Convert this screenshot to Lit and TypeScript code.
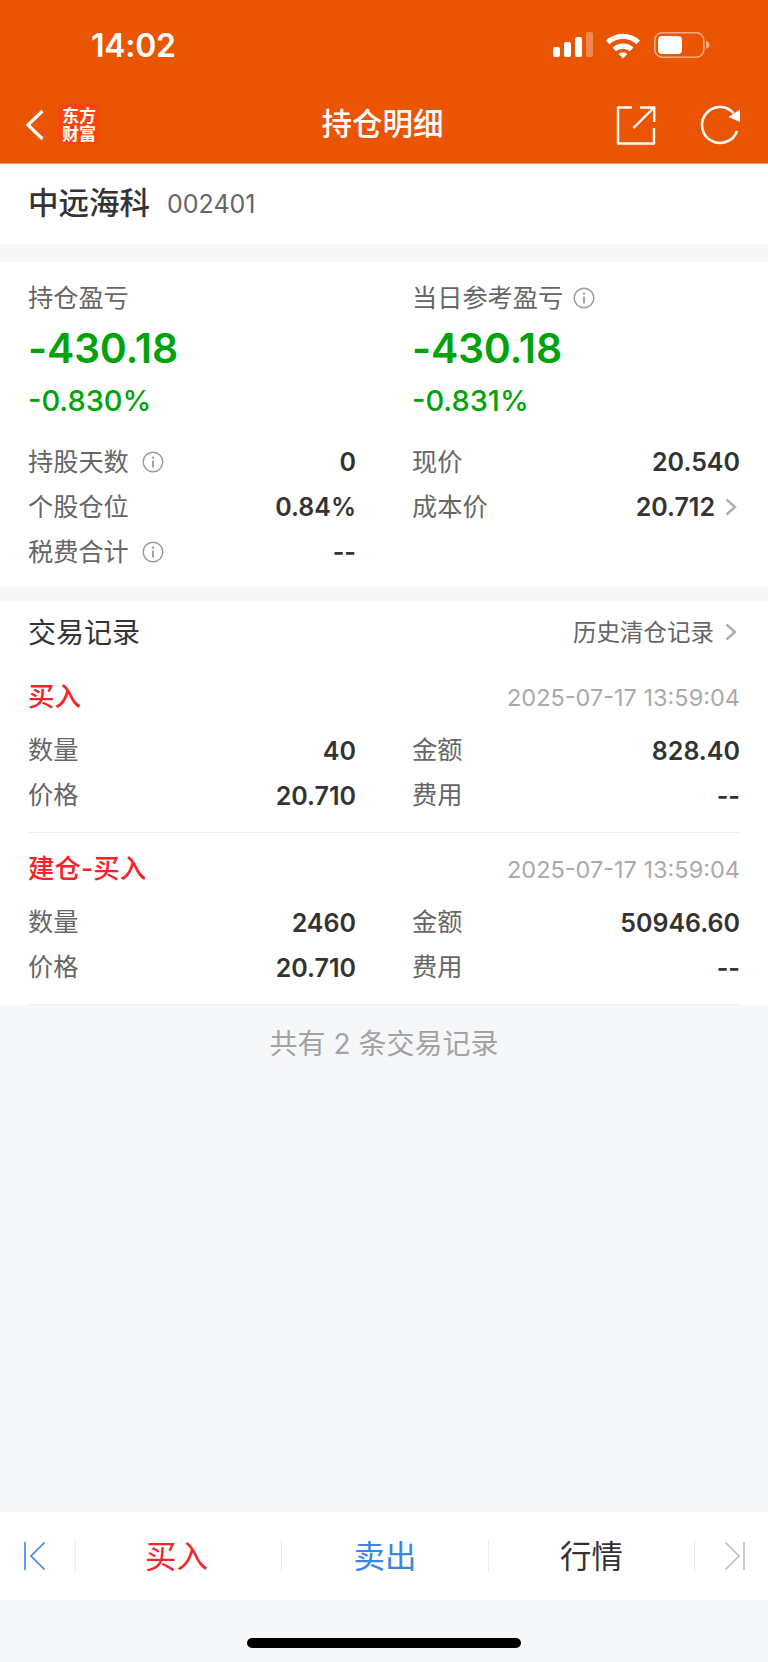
import { css, html, LitElement, svg } from 'lit';
import { customElement } from 'lit/decorators.js';

const infoIcon = html`
  <svg class="info" viewBox="0 0 22 22" width="22" height="22">
    <circle cx="11" cy="11" r="9.8" fill="none" stroke="#999" stroke-width="1.4"></circle>
    <circle cx="11" cy="6.6" r="1.2" fill="#999"></circle>
    <path d="M11 9.4v7.2" stroke="#999" stroke-width="1.8" fill="none"></path>
  </svg>
`;

const chevron = html`
  <svg class="chevron" viewBox="0 0 12 18" width="12" height="18">
    <path d="M1.5 1.5 10 9l-8.5 7.5" fill="none" stroke="#aeaeae" stroke-width="2.4"></path>
  </svg>
`;

interface Trade {
  type: string;
  time: string;
  qty: string;
  amount: string;
  price: string;
  fee: string;
}

const TRADES: Trade[] = [
  { type: '买入', time: '2025-07-17 13:59:04', qty: '40', amount: '828.40', price: '20.710', fee: '--' },
  { type: '建仓-买入', time: '2025-07-17 13:59:04', qty: '2460', amount: '50946.60', price: '20.710', fee: '--' },
];

@customElement('app-root')
export class AppRoot extends LitElement {
  private renderStatusBar() {
    return html`
      <div class="status">
        <span class="clock">14:02</span>
        <svg class="status-icons" viewBox="0 0 160 30" width="160" height="30">
          ${svg`
            <rect x="0" y="15" width="7" height="10" rx="2" fill="#fff"></rect>
            <rect x="11" y="10" width="7" height="15" rx="2" fill="#fff"></rect>
            <rect x="22" y="5" width="7" height="20" rx="2" fill="#fff"></rect>
            <rect x="33" y="0" width="7" height="25" rx="2" fill="#fff" fill-opacity="0.3"></rect>
            <path d="M53 8.5a25 25 0 0 1 34 0l-3.4 3.8a20 20 0 0 0-27.2 0z" fill="#fff"></path>
            <path d="M59.5 15.6a15.5 15.5 0 0 1 21 0l-3.5 3.7a10.5 10.5 0 0 0-14 0z" fill="#fff"></path>
            <path d="M65.6 22a6.5 6.5 0 0 1 8.8 0L70 26.4z" fill="#fff"></path>
            <rect x="101.8" y="0.8" width="49" height="24.4" rx="7.5" fill="none" stroke="#fff" stroke-opacity="0.5" stroke-width="1.6"></rect>
            <rect x="105" y="4" width="24" height="18" rx="4" fill="#fff"></rect>
            <path d="M153 9c2.4.6 3.6 2.2 3.6 4s-1.2 3.4-3.6 4z" fill="#fff" fill-opacity="0.5"></path>
          `}
        </svg>
      </div>
    `;
  }

  private renderNav() {
    return html`
      <div class="nav">
        <div class="nav-left">
          <svg viewBox="0 0 20 32" width="20" height="32">
            <path d="M17.5 2 3 16l14.5 14" fill="none" stroke="#fff" stroke-width="3.2"></path>
          </svg>
          <div class="logo">东方财富</div>
        </div>
        <div class="nav-title">持仓明细</div>
        <div class="nav-right">
          <svg viewBox="0 0 40 40" width="40" height="40">
            <path d="M16 2.5H2v36h36V23" fill="none" stroke="#fff" stroke-width="2.4" stroke-linejoin="round"></path>
            <path d="M24 2.5h14.2V17M38 2.5 17.5 23" fill="none" stroke="#fff" stroke-width="2.4"></path>
          </svg>
          <svg viewBox="0 0 40 40" width="40" height="40">
            <path d="M33.5 8A18 18 0 1 0 37 26" fill="none" stroke="#fff" stroke-width="2.6"></path>
            <path d="M40 4.5V17L28.5 12z" fill="#fff"></path>
          </svg>
        </div>
      </div>
    `;
  }

  private renderSummary() {
    return html`
      <section class="summary">
        <div class="col">
          <div class="label">持仓盈亏</div>
          <div class="big">-430.18</div>
          <div class="pct">-0.830%</div>
          <div class="rows">
            <div class="row"><span class="key">持股天数</span>${infoIcon}<span class="val">0</span></div>
            <div class="row"><span class="key">个股仓位</span><span class="val">0.84%</span></div>
            <div class="row"><span class="key">税费合计</span>${infoIcon}<span class="val">--</span></div>
          </div>
        </div>
        <div class="col">
          <div class="label">当日参考盈亏${infoIcon}</div>
          <div class="big">-430.18</div>
          <div class="pct">-0.831%</div>
          <div class="rows">
            <div class="row"><span class="key">现价</span><span class="val">20.540</span></div>
            <div class="row"><span class="key">成本价</span><span class="val">20.712${chevron}</span></div>
          </div>
        </div>
      </section>
    `;
  }

  private renderTrade(t: Trade) {
    return html`
      <div class="trade">
        <div class="trade-head">
          <span class="trade-type">${t.type}</span>
          <span class="trade-time">${t.time}</span>
        </div>
        <div class="trade-grid">
          <div class="row"><span class="key">数量</span><span class="val">${t.qty}</span></div>
          <div class="row"><span class="key">金额</span><span class="val">${t.amount}</span></div>
          <div class="row"><span class="key">价格</span><span class="val">${t.price}</span></div>
          <div class="row"><span class="key">费用</span><span class="val">${t.fee}</span></div>
        </div>
      </div>
    `;
  }

  render() {
    return html`
      <header>${this.renderStatusBar()}${this.renderNav()}</header>
      <div class="stock">
        <span class="stock-name">中远海科</span>
        <span class="stock-code">002401</span>
      </div>
      ${this.renderSummary()}
      <section class="records">
        <div class="records-head">
          <span class="records-title">交易记录</span>
          <span class="records-link"><span class="link-text">历史清仓记录</span>${chevron}</span>
        </div>
        ${TRADES.map((t) => this.renderTrade(t))}
      </section>
      <div class="count">共有 2 条交易记录</div>
      <div class="spacer"></div>
      <footer class="toolbar">
        <div class="edge first">
          <svg viewBox="0 0 22 28" width="22" height="28">
            <path d="M1 0v28" stroke="#3a85e6" stroke-width="1.6" fill="none"></path>
            <path d="M20.5 .5 7 14l13.5 13.5" stroke="#3a85e6" stroke-width="1.6" fill="none"></path>
          </svg>
        </div>
        <div class="action buy">买入</div>
        <div class="action sell">卖出</div>
        <div class="action quote">行情</div>
        <div class="edge last">
          <svg viewBox="0 0 22 28" width="22" height="28">
            <path d="M1.5 .5 15 14 1.5 27.5" stroke="#bdbdbd" stroke-width="1.6" fill="none"></path>
            <path d="M20 0v28" stroke="#bdbdbd" stroke-width="1.6" fill="none"></path>
          </svg>
        </div>
      </footer>
      <div class="home"><div class="home-bar"></div></div>
    `;
  }

  static styles = css`
    :host {
      display: flex;
      flex-direction: column;
      height: 1662px;
      background: #f6f7f9;
      font-family: Inter, 'Noto Sans CJK SC', sans-serif;
      color: #333;
    }

    header {
      height: 164px;
      box-sizing: border-box;
      background: #ea5504;
      border-bottom: 1px solid #f39a6c;
      color: #fff;
      flex: none;
    }

    .status {
      height: 88px;
      display: flex;
      justify-content: space-between;
      align-items: flex-start;
      padding: 0 55px 0 91px;
    }

    .clock {
      font-size: 32px;
      font-weight: 600;
      line-height: 91px;
      letter-spacing: -0.3px;
    }

    .status-icons {
      margin-top: 32px;
    }

    .nav {
      height: 75px;
      box-sizing: border-box;
      display: grid;
      grid-template-columns: 1fr auto 1fr;
      align-items: center;
      padding: 0 28px 2px 25px;
    }

    .nav-left {
      display: flex;
      align-items: center;
      gap: 13px;
    }

    .logo {
      width: 42px;
      height: 42px;
      box-sizing: border-box;
      margin-bottom: 2px;
      padding: 3px 4px;
      border-radius: 10px;
      background: #fc4410;
      font-size: 17px;
      font-weight: 700;
      line-height: 18px;
      font-family: 'Noto Sans CJK SC', sans-serif;
    }

    .nav-title {
      font-size: 30.5px;
      font-weight: 500;
      line-height: 68px;
      padding-bottom: 5px;
      font-family: 'Noto Sans CJK SC', sans-serif;
    }

    .nav-right {
      display: flex;
      align-items: center;
      justify-content: flex-end;
      gap: 44px;
    }

    .stock {
      height: 80px;
      background: #fff;
      display: flex;
      align-items: center;
      gap: 17px;
      padding: 0 28px;
      flex: none;
    }

    .stock-name {
      font-size: 30.5px;
      font-weight: 500;
      padding-bottom: 6px;
    }

    .stock-code {
      font-size: 25px;
      color: #666;
    }

    .summary {
      margin-top: 18px;
      height: 325px;
      box-sizing: border-box;
      background: #fff;
      padding: 18px 28px 0;
      display: grid;
      grid-template-columns: 1fr 1fr;
      column-gap: 56px;
      flex: none;
    }

    .label {
      display: flex;
      align-items: center;
      gap: 10px;
      font-size: 25.2px;
      line-height: 36px;
      color: #666;
    }

    .big {
      font-size: 41px;
      font-weight: 600;
      line-height: 60px;
      margin-top: 2px;
      letter-spacing: -0.2px;
      color: #00a30a;
    }

    .pct {
      font-size: 29px;
      font-weight: 500;
      line-height: 44px;
      margin-top: 1px;
      color: #00a30a;
    }

    .rows {
      margin-top: 16px;
    }

    .row {
      height: 45px;
      display: flex;
      align-items: center;
    }

    .row .info {
      margin-left: 13px;
    }

    .key {
      font-size: 25.2px;
      color: #666;
      padding-bottom: 4px;
    }

    .val {
      margin-left: auto;
      display: flex;
      align-items: center;
      gap: 10px;
      font-size: 25px;
      font-weight: 600;
      color: #333;
    }

    .chevron {
      margin-right: 3px;
    }

    .records {
      margin-top: 14px;
      background: #fff;
      padding: 0 28px;
      flex: none;
    }

    .records-head {
      height: 60px;
      box-sizing: border-box;
      padding-top: 2px;
      display: flex;
      align-items: center;
      justify-content: space-between;
    }

    .records-title {
      font-size: 28px;
      padding-bottom: 2px;
    }

    .records-link {
      display: flex;
      align-items: center;
      gap: 11px;
      font-size: 23.5px;
      color: #666;
    }

    .link-text {
      padding-bottom: 3px;
    }

    .trade {
      height: 172px;
      box-sizing: border-box;
      border-bottom: 1px solid #f0f0f0;
    }

    .trade-head {
      height: 62px;
      box-sizing: border-box;
      padding-top: 10px;
      display: flex;
      align-items: center;
      justify-content: space-between;
    }

    .trade-type {
      font-size: 26.5px;
      font-weight: 500;
      color: #f7222a;
      padding-bottom: 6px;
    }

    .trade-time {
      font-size: 23.5px;
      color: #aaa;
    }

    .trade-grid {
      display: grid;
      grid-template-columns: 1fr 1fr;
      column-gap: 56px;
      margin-top: 5px;
    }

    .trade-grid .key {
      padding-bottom: 6px;
    }

    .count {
      margin-top: 19px;
      text-align: center;
      font-size: 28px;
      line-height: 40px;
      color: #a3a3a3;
    }

    .spacer {
      flex: 1;
    }

    .toolbar {
      height: 88px;
      background: #fff;
      display: grid;
      grid-template-columns: 75px 206px 207px 206px 74px;
      align-items: center;
      flex: none;
    }

    .edge {
      display: flex;
      height: 32px;
      align-items: center;
    }

    .first {
      padding-left: 24px;
    }

    .last {
      padding-left: 29px;
      border-left: 1px solid #ececec;
    }

    .action {
      height: 32px;
      box-sizing: border-box;
      padding-bottom: 4px;
      display: flex;
      align-items: center;
      justify-content: center;
      font-size: 31.5px;
      border-left: 1px solid #ececec;
    }

    .buy {
      color: #f7222a;
      padding-right: 4px;
    }

    .sell {
      color: #3a85e6;
    }

    .quote {
      color: #333;
    }

    .home {
      height: 62px;
      box-sizing: border-box;
      padding-top: 38px;
      display: flex;
      justify-content: center;
      flex: none;
    }

    .home-bar {
      width: 274px;
      height: 10px;
      border-radius: 5px;
      background: #000;
    }
  `;
}
